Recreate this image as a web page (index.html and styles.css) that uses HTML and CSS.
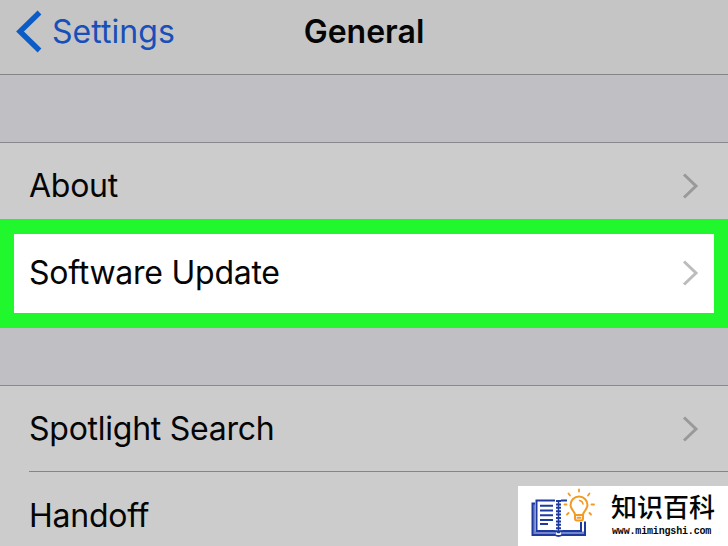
FILE: index.html
```
<!DOCTYPE html>
<html lang="en">
<head>
    <meta charset="UTF-8">
    <meta name="viewport" content="width=device-width, initial-scale=1.0">
    <title>General</title>
    <link rel="stylesheet" href="styles.css">
</head>
<body>
    <header class="navbar">
        <a class="back">
            <svg class="back-icon" width="28" height="44" viewBox="0 0 28 44">
                <path d="M23.500 2.500 L4 21.500 L23.500 40.500" fill="none" stroke="#0b5cc4" stroke-width="5.4"/>
            </svg>
            <span class="back-label">Settings</span>
        </a>
        <h1 class="title">General</h1>
    </header>

    <main>
        <section class="group group-first">
            <div class="row row-about">
                <span class="label">About</span>
                <svg class="chevron" width="18" height="28" viewBox="0 0 18 28">
                    <path d="M2 2.500 L14 14 L2 25.500"/>
                </svg>
            </div>
            <div class="row row-active">
                <span class="label">Software Update</span>
                <svg class="chevron" width="18" height="28" viewBox="0 0 18 28">
                    <path d="M2 2.500 L14 14 L2 25.500"/>
                </svg>
            </div>
        </section>

        <section class="group group-second">
            <div class="row row-search">
                <span class="label">Spotlight Search</span>
                <svg class="chevron" width="18" height="28" viewBox="0 0 18 28">
                    <path d="M2 2.500 L14 14 L2 25.500"/>
                </svg>
            </div>
            <div class="row row-handoff">
                <span class="label">Handoff</span>
            </div>
        </section>
    </main>

    <div class="watermark">
        <svg class="logo" width="66" height="50" viewBox="0 0 66 50">
            <!-- book -->
            <g fill="none" stroke="#1f3a9e" stroke-width="2">
                <path d="M3 42 H26 M31 42 H54" stroke-width="3" stroke="#7485cc"/>
                <path d="M4 13 V42" stroke-width="2" stroke="#7485cc"/>
                <path d="M25 9.500 H6.500 V40 H24 Q28 40 28.500 42 Q29 40 33 40 H51 V31"/>
                <path d="M31 9.500 H37"/>
                <path d="M5 12.500 H2.500 V44 H25 Q28.500 46 32 44 H55 V30.500"/>
                <path d="M28.500 9 V41" stroke-width="1.500"/>
                <path d="M28.500 9 V40" stroke-width="5" stroke-dasharray="2 1.400"/>
                <path d="M10 14.700 H23 M10 19.500 H23 M10 24.300 H23 M10 29 H23 M10 33 H18" stroke-width="2"/>
            </g>
            <!-- bulb -->
            <g fill="none" stroke="#f39a22" stroke-width="2" stroke-linecap="round">
                <path d="M45 24 C45 20 40.500 19 40.500 14 A8.500 8.500 0 0 1 57.500 14 C57.500 19 53 20 53 24 Z" fill="#fff"/>
                <path d="M45 24 V27.500 Q45 29.500 47 29.500 H51 Q53 29.500 53 27.500 V24 M47.500 26.800 H50.500"/>
                <path d="M49.500 9.500 Q52.500 10 53 13" stroke-width="1.500"/>
                <path d="M49 -1.500 V0.500 M38.500 2.500 L40 4.500 M59.500 2.500 L58 4.500 M34.500 13.500 H36.500 M61.500 13.500 H64 M37 23.500 L38.500 22 M61 23.500 L59.500 22" stroke-width="1.800"/>
            </g>
        </svg>
        <div class="brand">
            <span class="brand-name" lang="zh">知识百科</span>
            <span class="brand-url">www.mimingshi.com</span>
        </div>
    </div>
</body>
</html>
```

FILE: styles.css
```
* {
    box-sizing: border-box;
}
body {
    margin: 0;
    width: 728px;
    height: 546px;
    overflow: hidden;
    background-color: #bfbfc4;
    color: #050505;
    font-family: Inter, "Liberation Sans", sans-serif;
    font-size: 32px;
}
.navbar {
    display: grid;
    grid-template-columns: 1fr auto 1fr;
    height: 75px;
    padding: 10px 16px 0;
    background-color: #c5c5c6;
    border-bottom: 1px solid #858589;
}
.back {
    display: flex;
    height: 44px;
    color: #184fb8;
}
.back-icon {
    flex: none;
}
.back-label {
    margin-left: 8px;
    line-height: 44px;
    letter-spacing: 0.05px;
}
.title {
    margin: 0;
    font-size: 32px;
    font-weight: 600;
    line-height: 44px;
}
.group {
    background-color: #cccccc;
    border-top: 1px solid #88888d;
}
.group-first {
    margin-top: 67px;
}
.group-second {
    margin-top: 57px;
}
.row {
    display: flex;
    align-items: center;
    justify-content: space-between;
    padding: 0 28px 0 29px;
}
.row-about {
    height: 76px;
    padding-top: 9px;
}
.row-active {
    height: 109px;
    padding: 0 14px 2px 15px;
    background-color: #fff;
    border: 15px solid #20f72c;
    border-width: 15px 14px;
}
.row-search {
    height: 85px;
}
.row-handoff {
    height: 75px;
    margin-left: 29px;
    padding: 13px 0 0;
    border-top: 1px solid #858585;
}
.label {
    line-height: 40px;
    white-space: nowrap;
    letter-spacing: -0.25px;
}
.chevron {
    fill: none;
    stroke: #999999;
    stroke-width: 3;
}
.row-active .chevron {
    stroke: #bcbcbf;
}
.watermark {
    position: absolute;
    left: 518px;
    top: 486px;
    display: flex;
    width: 210px;
    height: 60px;
    padding: 5px 0 0 12px;
    background-color: #fff;
}
.logo {
    overflow: visible;
}
.brand {
    display: flex;
    flex-direction: column;
    margin-left: 15px;
}
.brand-name {
    font-family: "Noto Sans CJK SC", sans-serif;
    font-size: 26px;
    font-weight: 500;
    line-height: 30px;
}
.brand-url {
    margin-top: 5px;
    margin-left: 1px;
    font-family: "Liberation Mono", monospace;
    font-size: 10px;
    font-weight: bold;
    line-height: 12px;
    letter-spacing: -0.17px;
}
```
